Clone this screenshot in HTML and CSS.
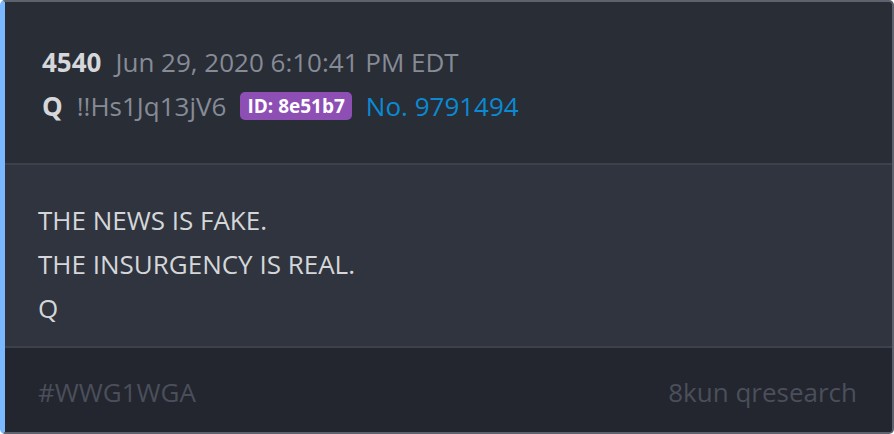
FILE: index.html
```html
<!DOCTYPE html>
<html>
<head>
  <title>Post 4540</title>
  <link rel="stylesheet" href="styles.css">
</head>
<body>
  <div class="post">
    <div class="post-header">
      <div class="meta-line">
        <span class="post-num">4540</span>
        <span class="post-date">Jun 29, 2020 6:10:41 PM EDT</span>
      </div>
      <div class="meta-line">
        <span class="author">Q</span>
        <span class="trip">!!Hs1Jq13jV6</span>
        <span class="id-badge">ID: 8e51b7</span>
        <a class="post-link" href="#">No. 9791494</a>
      </div>
    </div>
    <div class="post-body">
      <p>THE NEWS IS FAKE.</p>
      <p>THE INSURGENCY IS REAL.</p>
      <p>Q</p>
    </div>
    <div class="post-footer">
      <span class="tag">#WWG1WGA</span>
      <span class="source">8kun qresearch</span>
    </div>
  </div>
</body>
</html>
```

FILE: styles.css
```css
body {
  margin: 0;
  font-family: "Open Sans", "Noto Sans", sans-serif;
  background: #ffffff;
}

.post {
  height: 434px;
  box-sizing: border-box;
  display: flex;
  flex-direction: column;
  border: 2px solid #5d626d;
  border-left: 5px solid #7ab8ff;
  border-radius: 5px;
  overflow: hidden;
  background: #292d36;
}

.post-header {
  padding: 38px 37px 0;
  height: 163px;
  flex-shrink: 0;
  box-sizing: border-box;
  border-bottom: 2px solid #3c414c;
}

.meta-line {
  display: flex;
  align-items: center;
  gap: 14px;
  height: 44px;
  font-size: 26px;
}

.post-num,
.author {
  font-weight: bold;
  color: #d6d7da;
}

.post-date,
.trip {
  color: #868b96;
}

.id-badge {
  background: #8e4fb5;
  color: #ffffff;
  font-weight: bold;
  font-size: 19px;
  line-height: 28px;
  padding: 0 7px;
  border-radius: 5px;
}

.post-link {
  color: #0a8ad2;
  text-decoration: none;
}

.post-body {
  background: #2f343e;
  padding: 33px 33px 0;
  height: 183px;
  flex-shrink: 0;
  box-sizing: border-box;
  border-bottom: 2px solid #3c414c;
}

.post-body p {
  margin: 0;
  font-size: 26px;
  line-height: 44px;
  color: #d5d6d9;
}

.post-footer {
  flex: 1;
  background: #23262e;
  display: flex;
  justify-content: space-between;
  align-items: center;
  padding: 4px 35px 0 33px;
  font-size: 26px;
  color: #4a4f5b;
}
```
